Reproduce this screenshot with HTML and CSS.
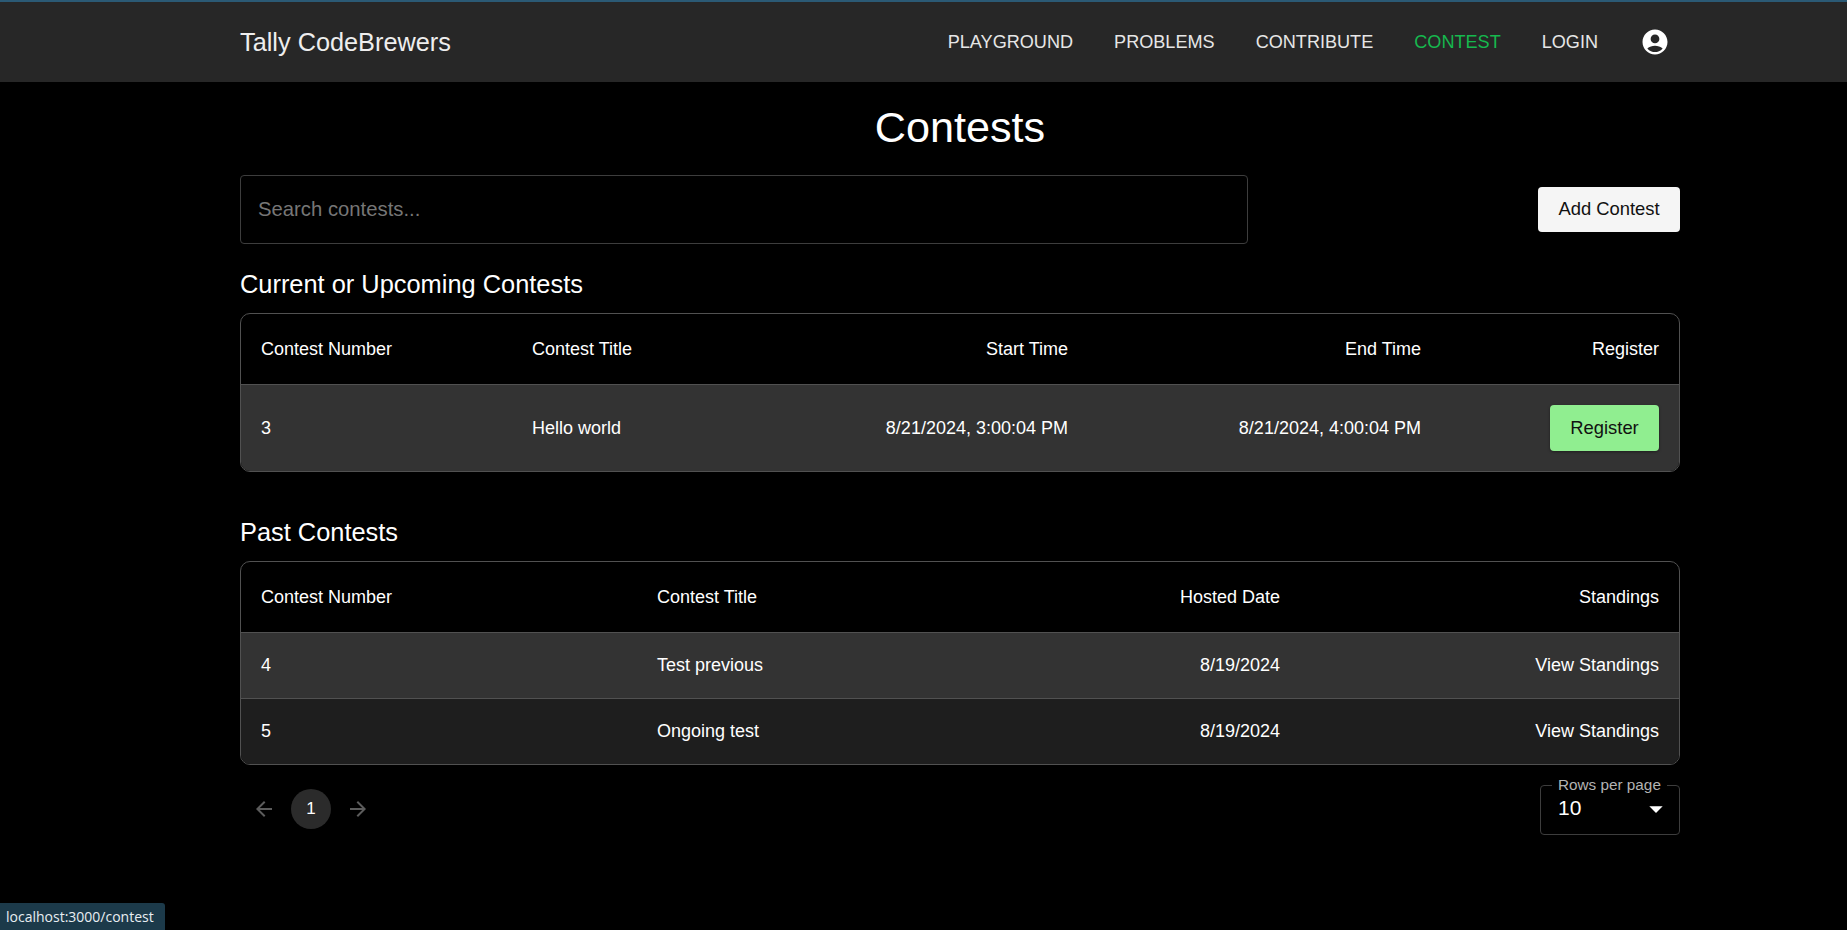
FILE: index.html
```html
<!DOCTYPE html>
<html>
<head>
  <title>Contests</title>
  <link rel="stylesheet" href="styles.css">
</head>
<body>
  <header class="navbar">
    <div class="navbar-inner">
      <a class="brand">Tally CodeBrewers</a>
      <nav class="nav-links">
        <a>Playground</a>
        <a>Problems</a>
        <a>Contribute</a>
        <a class="active">Contest</a>
        <a>Login</a>
        <svg class="account-icon" viewBox="0 0 24 24"><path d="M12 2C6.48 2 2 6.48 2 12s4.48 10 10 10 10-4.48 10-10S17.52 2 12 2zm0 4c1.93 0 3.5 1.57 3.5 3.5S13.93 13 12 13s-3.5-1.57-3.5-3.5S10.07 6 12 6zm0 14c-2.03 0-4.43-.82-6.14-2.88C7.55 15.8 9.68 15 12 15s4.45.8 6.14 2.12C16.43 19.18 14.03 20 12 20z"/></svg>
      </nav>
    </div>
  </header>

  <main class="page">
    <h1 class="page-title">Contests</h1>

    <div class="toolbar">
      <input class="search" type="text" placeholder="Search contests...">
      <button class="btn btn-add">Add Contest</button>
    </div>

    <h2 class="section-title">Current or Upcoming Contests</h2>
    <div class="table-wrap">
      <table class="upcoming">
        <colgroup>
          <col class="u1"><col class="u2"><col class="u3"><col class="u4"><col>
        </colgroup>
        <thead>
          <tr>
            <th>Contest Number</th>
            <th>Contest Title</th>
            <th class="right">Start Time</th>
            <th class="right">End Time</th>
            <th class="right">Register</th>
          </tr>
        </thead>
        <tbody>
          <tr class="row-light row-tall">
            <td>3</td>
            <td>Hello world</td>
            <td class="right">8/21/2024, 3:00:04 PM</td>
            <td class="right">8/21/2024, 4:00:04 PM</td>
            <td class="right"><button class="btn btn-register">Register</button></td>
          </tr>
        </tbody>
      </table>
    </div>

    <h2 class="section-title section-past">Past Contests</h2>
    <div class="table-wrap">
      <table class="past">
        <colgroup>
          <col class="p1"><col class="p2"><col class="p3"><col>
        </colgroup>
        <thead>
          <tr>
            <th>Contest Number</th>
            <th>Contest Title</th>
            <th class="right">Hosted Date</th>
            <th class="right">Standings</th>
          </tr>
        </thead>
        <tbody>
          <tr class="row-light">
            <td>4</td>
            <td>Test previous</td>
            <td class="right">8/19/2024</td>
            <td class="right">View Standings</td>
          </tr>
          <tr class="row-dark">
            <td>5</td>
            <td>Ongoing test</td>
            <td class="right">8/19/2024</td>
            <td class="right">View Standings</td>
          </tr>
        </tbody>
      </table>
    </div>

    <div class="table-footer">
      <div class="pagination">
        <svg class="page-arrow" viewBox="0 0 24 24"><path d="M20 11H7.83l5.59-5.59L12 4l-8 8 8 8 1.41-1.41L7.83 13H20v-2z"/></svg>
        <span class="page-num">1</span>
        <svg class="page-arrow" viewBox="0 0 24 24"><path d="m12 4-1.41 1.41L16.17 11H4v2h12.17l-5.58 5.59L12 20l8-8z"/></svg>
      </div>
      <fieldset class="rows-select">
        <legend>Rows per page</legend>
        <span class="rows-value">10</span>
        <svg class="drop-icon" viewBox="0 0 24 24"><path d="M7 10l5 5 5-5z"/></svg>
      </fieldset>
    </div>
  </main>

  <div class="status-link">localhost:3000/contest</div>
</body>
</html>
```

FILE: styles.css
```css
html, body { height: 100%; }

body {
  margin: 0;
  background: #000;
  color: #fff;
  font-family: "Liberation Sans", Arial, sans-serif;
  font-size: 18px;
  overflow: hidden;
}

/* top bar */
.navbar {
  height: 80px;
  background: #272727;
  border-top: 2px solid #2b5a75;
}

.navbar-inner {
  width: 1440px;
  height: 100%;
  margin-left: 240px;
  display: flex;
  align-items: center;
  justify-content: space-between;
}

.brand { font-size: 25.3px; color: #eee; }

.nav-links {
  display: flex;
  align-items: center;
  gap: 41px;
  margin-right: 10px;
  font-size: 18.1px;
  text-transform: uppercase;
  color: #e6e6e6;
}

.nav-links .active { color: #16b84e; }

.account-icon { width: 30px; height: 30px; fill: #fff; margin-left: 1px; }

/* content */
.page { width: 1440px; margin-left: 240px; }

.page-title {
  margin: 0;
  padding-top: 20px;
  height: 75px;
  box-sizing: border-box;
  font-size: 43.2px;
  font-weight: 400;
  line-height: 50px;
  text-align: center;
}

.toolbar {
  display: flex;
  align-items: center;
  justify-content: space-between;
  margin-top: 18px;
}

.search {
  width: 1008px;
  height: 69px;
  box-sizing: border-box;
  padding: 0 17px;
  background: #000;
  border: 1px solid #3d3d3d;
  border-radius: 4px;
  color: #fff;
  font: inherit;
  font-size: 20.3px;
}

.search::placeholder { color: #767676; opacity: 1; }

.btn {
  border: none;
  border-radius: 4px;
  color: #111;
  font-family: inherit;
  font-size: 18.4px;
  padding: 0;
}

.btn-add { width: 142px; height: 45px; padding-bottom: 1px; background: #f5f5f5; }

.btn-register {
  width: 109px;
  height: 46px;
  background: #90ee90;
  vertical-align: middle;
  box-shadow: 0 1px 3px rgba(0, 0, 0, 0.4);
}

.section-title {
  margin: 27px 0 15px;
  font-size: 25.4px;
  font-weight: 400;
  line-height: 27px;
}

.section-past { margin-top: 47px; }

/* tables */
.table-wrap {
  border: 1px solid #515151;
  border-radius: 10px;
  overflow: hidden;
}

table {
  width: 100%;
  table-layout: fixed;
  border-collapse: collapse;
}

.u1 { width: 271px; }
.u2 { width: 276px; }
.u3 { width: 300px; }
.u4 { width: 353px; }

.p1 { width: 396px; }
.p2 { width: 400px; }
.p3 { width: 263px; }

th, td {
  padding: 0 20px;
  font-size: 18px;
  font-weight: 400;
  text-align: left;
  white-space: nowrap;
}

th { height: 70px; }

td { height: 65px; border-top: 1px solid #515151; }

.right { text-align: right; }

.row-light { background: #333; }
.row-dark { background: #1e1e1e; }
.row-tall td { height: 86px; }

/* footer of the past table */
.table-footer {
  display: flex;
  align-items: flex-start;
  justify-content: space-between;
  margin-top: 11px;
}

.pagination {
  display: flex;
  align-items: center;
  gap: 7px;
  margin-top: 13px;
  margin-left: 4px;
}

.page-arrow { width: 40px; height: 24px; fill: #5c5c5c; }

.page-num {
  width: 40px;
  height: 40px;
  border-radius: 50%;
  background: #2b2b2b;
  display: flex;
  align-items: center;
  justify-content: center;
  font-size: 17px;
}

.rows-select {
  box-sizing: border-box;
  width: 140px;
  height: 59px;
  margin: 0;
  padding: 0 7px 12px 17px;
  border: 1px solid #3d3d3d;
  border-radius: 4px;
  display: flex;
  align-items: center;
  justify-content: space-between;
}

.rows-select legend {
  padding: 0 6px;
  margin-left: -6px;
  font-size: 15.3px;
  color: #b3b3b3;
  line-height: 18px;
  white-space: nowrap;
}

.rows-value { font-size: 21px; }

.drop-icon { width: 32px; height: 32px; margin-top: 2px; fill: #fff; }

/* browser link preview */
.status-link {
  position: fixed;
  left: 0;
  bottom: 0;
  height: 27px;
  width: 159px;
  padding-left: 6px;
  background: #1c3a4a;
  border-top-right-radius: 3px;
  font-family: "Open Sans", sans-serif;
  font-size: 14px;
  line-height: 27px;
  white-space: nowrap;
  color: #e8eef2;
}
```
